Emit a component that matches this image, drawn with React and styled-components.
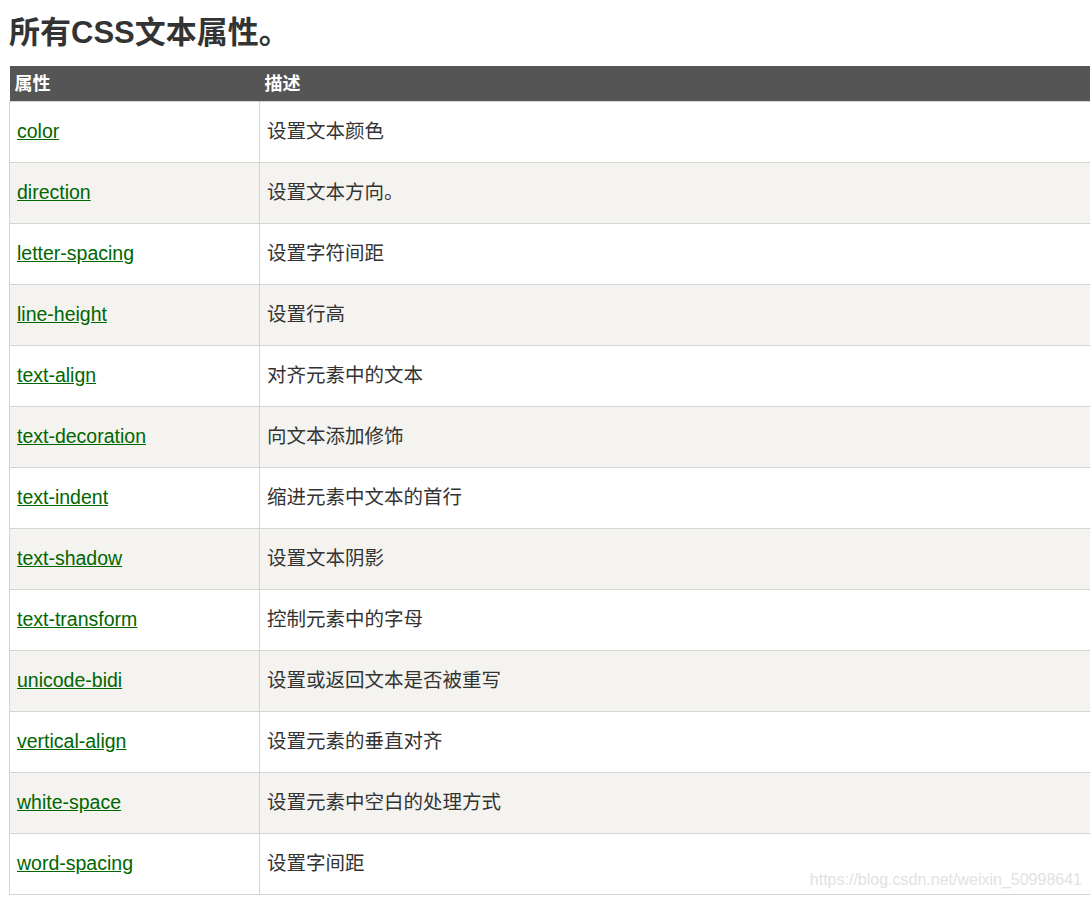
import styled, { createGlobalStyle } from "styled-components";

const GlobalStyle = createGlobalStyle`
  html, body {
    margin: 0;
    padding: 0;
    background: #fff;
    overflow: hidden;
  }
  body {
    font-family: "Liberation Sans", "Noto Sans CJK SC", Arial, sans-serif;
    color: #333;
  }
`;

const rows = [
  ["color", "设置文本颜色"],
  ["direction", "设置文本方向。"],
  ["letter-spacing", "设置字符间距"],
  ["line-height", "设置行高"],
  ["text-align", "对齐元素中的文本"],
  ["text-decoration", "向文本添加修饰"],
  ["text-indent", "缩进元素中文本的首行"],
  ["text-shadow", "设置文本阴影"],
  ["text-transform", "控制元素中的字母"],
  ["unicode-bidi", "设置或返回文本是否被重写"],
  ["vertical-align", "设置元素的垂直对齐"],
  ["white-space", "设置元素中空白的处理方式"],
  ["word-spacing", "设置字间距"],
];

export default function App() {
  return (
    <>
      <GlobalStyle />
      <Page>
        <Title>所有CSS文本属性。</Title>
        <Table>
          <thead>
            <tr>
              <HeadCell $first>属性</HeadCell>
              <HeadCell>描述</HeadCell>
            </tr>
          </thead>
          <tbody>
            {rows.map(([name, desc], i) => (
              <Row key={name} $alt={i % 2 === 1}>
                <Cell>
                  <PropLink href="#">{name}</PropLink>
                </Cell>
                <Cell>{desc}</Cell>
              </Row>
            ))}
          </tbody>
        </Table>
        <Watermark>https://blog.csdn.net/weixin_50998641</Watermark>
      </Page>
    </>
  );
}

const Page = styled.div`
  position: relative;
  padding: 0 0 0 9px;
  width: 1081px;
`;

const Title = styled.h1`
  margin: 0;
  padding: 13px 0 0 0;
  height: 66px;
  box-sizing: border-box;
  font-size: 31px;
  font-weight: bold;
  line-height: 40px;
  color: #333;
  font-family: "Liberation Sans", "Noto Sans CJK SC", Arial, sans-serif;
`;

const Table = styled.table`
  border-collapse: collapse;
  width: 1150px;
  table-layout: fixed;
`;

const HeadCell = styled.th`
  width: ${props => (props.$first ? "250px" : "auto")};
  height: 35px;
  padding: 2px 0 0 5px;
  box-sizing: border-box;
  background: #555;
  color: #fff;
  font-size: 18px;
  font-weight: bold;
  text-align: left;
  vertical-align: middle;
  line-height: 20px;
`;

const Row = styled.tr`
  background: ${props => (props.$alt ? "#f4f3ef" : "#fff")};
`;

const Cell = styled.td`
  height: 58px;
  padding: 0 0 2px 7px;
  border: 1px solid #d4d4d4;
  font-size: 19.5px;
  line-height: 24px;
  vertical-align: middle;
  color: #333;
`;

const PropLink = styled.a`
  color: #006600;
  text-decoration: underline;
`;

const Watermark = styled.div`
  position: absolute;
  right: 8px;
  top: 870px;
  font-size: 16px;
  line-height: 20px;
  color: #e2e2e2;
  white-space: nowrap;
`;
